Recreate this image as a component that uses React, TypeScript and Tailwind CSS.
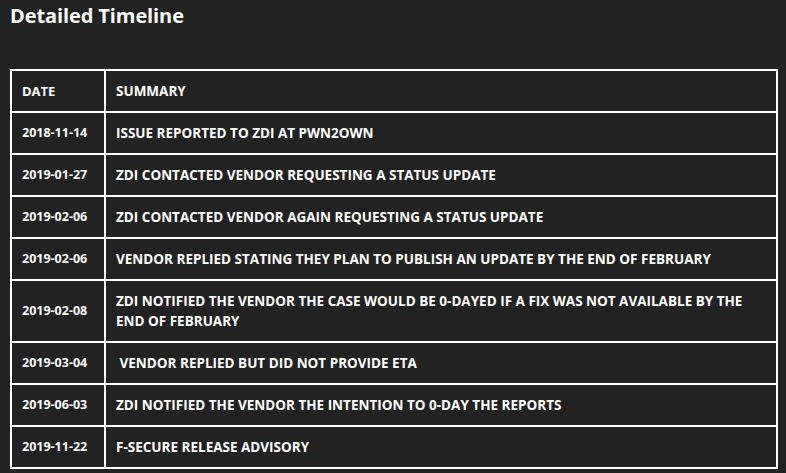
import React from 'react';

const rows = [
  { date: "2018-11-14", summary: "ISSUE REPORTED TO ZDI AT PWN2OWN" },
  { date: "2019-01-27", summary: "ZDI CONTACTED VENDOR REQUESTING A STATUS UPDATE" },
  { date: "2019-02-06", summary: "ZDI CONTACTED VENDOR AGAIN REQUESTING A STATUS UPDATE" },
  { date: "2019-02-06", summary: "VENDOR REPLIED STATING THEY PLAN TO PUBLISH AN UPDATE BY THE END OF FEBRUARY" },
  { date: "2019-02-08", summary: "ZDI NOTIFIED THE VENDOR THE CASE WOULD BE 0-DAYED IF A FIX WAS NOT AVAILABLE BY THE END OF FEBRUARY" },
  { date: "2019-03-04", summary: "\u00a0VENDOR REPLIED BUT DID NOT PROVIDE ETA" },
  { date: "2019-06-03", summary: "ZDI NOTIFIED THE VENDOR THE INTENTION TO 0-DAY THE REPORTS" },
  { date: "2019-11-22", summary: "F-SECURE RELEASE ADVISORY" },
];

export default function App() {
  return (
    <div className="w-[786px] h-[473px] bg-[#222222] text-white px-[10px] overflow-hidden font-['Open_Sans',sans-serif]">
      <h2 className="text-[20px] leading-[30px] font-bold pt-[1px] tracking-[-0.1px]">Detailed Timeline</h2>

      <table className="mt-[38px] w-[768px] border-collapse border-2 border-white text-[13.5px] leading-[20px] font-bold uppercase">
        <thead>
          <tr>
            <th className="border-2 border-white text-left px-[10px] py-[10px] w-[94px] font-bold text-[13px]">DATE</th>
            <th className="border-2 border-white text-left px-[10px] py-[10px] font-bold">SUMMARY</th>
          </tr>
        </thead>
        <tbody>
          {rows.map((r, i) => (
            <tr key={i}>
              <td className="border-2 border-white pl-[10px] pr-[8px] py-[10px] whitespace-nowrap text-[12.5px]">{r.date}</td>
              <td className="border-2 border-white px-[10px] py-[10px]">{r.summary}</td>
            </tr>
          ))}
        </tbody>
      </table>
    </div>
  );
}
